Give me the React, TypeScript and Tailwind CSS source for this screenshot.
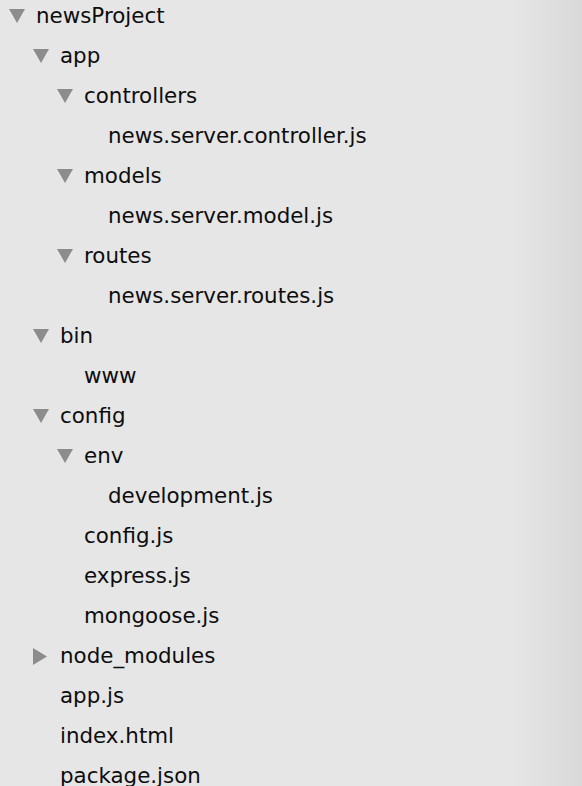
import React from "react";

type Node = { label: string; level: number; arrow?: "down" | "right" };

const rows: Node[] = [
  { label: "newsProject", level: 0, arrow: "down" },
  { label: "app", level: 1, arrow: "down" },
  { label: "controllers", level: 2, arrow: "down" },
  { label: "news.server.controller.js", level: 3 },
  { label: "models", level: 2, arrow: "down" },
  { label: "news.server.model.js", level: 3 },
  { label: "routes", level: 2, arrow: "down" },
  { label: "news.server.routes.js", level: 3 },
  { label: "bin", level: 1, arrow: "down" },
  { label: "www", level: 2 },
  { label: "config", level: 1, arrow: "down" },
  { label: "env", level: 2, arrow: "down" },
  { label: "development.js", level: 3 },
  { label: "config.js", level: 2 },
  { label: "express.js", level: 2 },
  { label: "mongoose.js", level: 2 },
  { label: "node_modules", level: 1, arrow: "right" },
  { label: "app.js", level: 1 },
  { label: "index.html", level: 1 },
  { label: "package.json", level: 1 },
];

const padClass = ["pl-[9px]", "pl-[33px]", "pl-[57px]", "pl-[81px]"];

function Arrow({ dir }: { dir?: "down" | "right" }) {
  if (!dir) return <span className="w-[16px] shrink-0" />;
  return (
    <span className="w-[16px] h-[17px] shrink-0 flex items-center justify-start">
      {dir === "down" ? (
        <svg width="16" height="14" viewBox="0 0 16 14">
          <polygon points="0,0 16,0 8,14" fill="#8c8c8c" />
        </svg>
      ) : (
        <svg width="14" height="17" viewBox="0 0 14 17">
          <polygon points="0,0 14,8.5 0,17" fill="#8c8c8c" />
        </svg>
      )}
    </span>
  );
}

export default function App() {
  return (
    <div
      className="w-[582px] h-[786px] overflow-hidden bg-[linear-gradient(to_right,#e6e6e6_0%,#e6e6e6_88%,#d9d9d9_100%)]"
      style={{ fontFamily: '"DejaVu Sans", "Lucida Grande", sans-serif' }}
    >
      <div className="-mt-[4px] flex flex-col">
        {rows.map((r, i) => (
          <div
            key={i}
            className={`h-[40px] flex items-center ${padClass[r.level]} text-[21.4px] text-[#0d0d0d] leading-none`}
          >
            <Arrow dir={r.arrow} />
            <span className="ml-[11px] whitespace-nowrap">{r.label}</span>
          </div>
        ))}
      </div>
    </div>
  );
}
